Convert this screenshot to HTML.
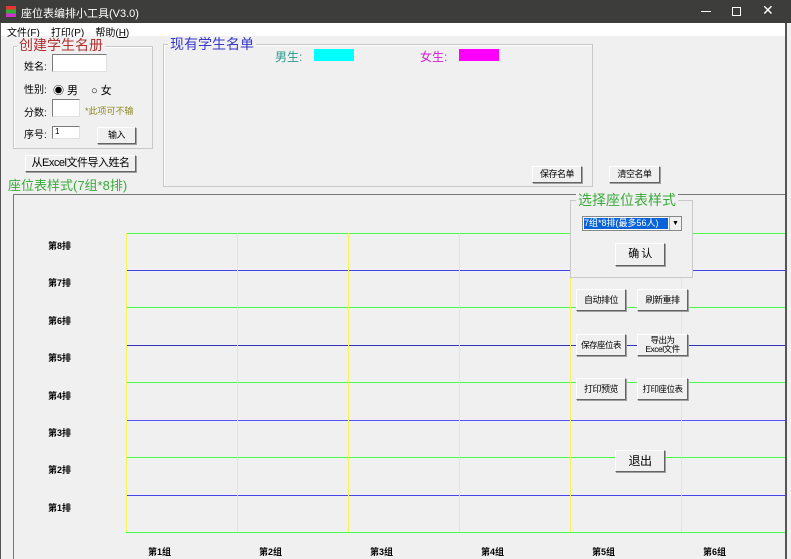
<!DOCTYPE html>
<html><head><meta charset="utf-8"><style>
*{margin:0;padding:0;box-sizing:border-box}
body{width:791px;height:559px;overflow:hidden;background:#f0f0f0;font-family:"Liberation Sans","Noto Sans CJK SC",sans-serif;font-size:12px;position:relative}
.a{position:absolute}
.btn{position:absolute;background:#f0f0f0;border:1px solid #fff;border-right-color:#646464;border-bottom-color:#646464;box-shadow:1px 1px 0 #a0a0a0;font-size:9px;text-align:center;color:#000;white-space:nowrap;overflow:hidden;letter-spacing:-0.5px}
.fs{position:absolute;border:1px solid #c8c8c8;box-shadow:inset 1px 1px 0 #fff}
.lg{position:absolute;background:#f0f0f0;padding:0 2px;font-size:14px;line-height:16px}
.in{position:absolute;background:#fff;border:1px solid #7a7a7a;border-right-color:#e0e0e0;border-bottom-color:#e0e0e0}
.rl{position:absolute;left:48px;font-size:9px;font-weight:bold}
.cl{position:absolute;top:545px;font-size:9px;font-weight:bold}
</style></head><body>
<div class="a" style="left:0;top:0;width:791px;height:23px;background:#3d3d3b"></div>
<div class="a" style="left:6px;top:6px;width:10px;height:11px;background:linear-gradient(#e33 0 33%,#3a3 33% 66%,#c3c 66%)"></div>
<div class="a" style="left:21px;top:5px;color:#fff;font-size:11px">座位表编排小工具(V3.0)</div>
<div class="a" style="left:701px;top:11px;width:10px;height:1px;background:#fff"></div>
<div class="a" style="left:732px;top:7px;width:9px;height:9px;border:1px solid #fff"></div>
<div class="a" style="left:762px;top:2px;color:#fff;font-size:14px">✕</div>
<div class="a" style="left:0;top:23px;width:785px;height:13px;background:#fff"></div>
<div class="a" style="left:7px;top:24px;font-size:10px">文件(<u>F</u>)&nbsp;&nbsp;&nbsp;&nbsp;打印(<u>P</u>)&nbsp;&nbsp;&nbsp;&nbsp;帮助(<u>H</u>)</div>
<div class="a" style="left:0;top:23px;width:1px;height:536px;background:#555"></div>

<div class="fs" style="left:13px;top:46px;width:140px;height:103px"></div>
<div class="lg" style="left:17px;top:37px;color:#b03030">创建学生名册</div>
<div class="a" style="left:24px;top:58px;font-size:10px">姓名:</div>
<div class="in" style="left:52px;top:54px;width:55px;height:18px"></div>
<div class="a" style="left:24px;top:81px;font-size:10px">性别:</div>
<div class="a" style="left:53px;top:82px;font-size:11px">◉ 男</div>
<div class="a" style="left:91px;top:82px;font-size:11px">○ 女</div>
<div class="a" style="left:24px;top:104px;font-size:10px">分数:</div>
<div class="in" style="left:52px;top:99px;width:28px;height:18px"></div>
<div class="a" style="left:85px;top:104px;font-size:9px;color:#8a8a20">*此项可不输</div>
<div class="a" style="left:24px;top:126px;font-size:10px">序号:</div>
<div class="in" style="left:52px;top:126px;width:28px;height:13px;font-size:8px;padding-left:2px">1</div>
<div class="btn" style="left:97px;top:127px;width:39px;height:17px;line-height:15px">输入</div>
<div class="btn" style="left:25px;top:155px;width:111px;height:17px;line-height:15px;font-size:11px">从Excel文件导入姓名</div>
<div class="a" style="left:8px;top:175px;color:#3aaa3a;font-size:13px">座位表样式(7组*8排)</div>

<div class="fs" style="left:163px;top:44px;width:430px;height:143px"></div>
<div class="lg" style="left:168px;top:36px;color:#3838c8">现有学生名单</div>
<div class="a" style="left:275px;top:48px;color:#2a9a8a;font-size:12px">男生:</div>
<div class="a" style="left:314px;top:49px;width:40px;height:12px;background:#0ff"></div>
<div class="a" style="left:420px;top:48px;color:#d020d0;font-size:12px">女生:</div>
<div class="a" style="left:459px;top:49px;width:40px;height:12px;background:#f0f"></div>
<div class="btn" style="left:532px;top:166px;width:50px;height:17px;line-height:15px">保存名单</div>
<div class="btn" style="left:609px;top:166px;width:51px;height:17px;line-height:15px">清空名单</div>

<div class="a" style="left:13px;top:194px;width:773px;height:365px;border-left:1px solid #777;border-top:1px solid #777"></div>
<svg class="a" style="left:0;top:0" width="791" height="559" shape-rendering="crispEdges">
<g stroke-width="1">
<line x1="126" y1="233.5" x2="785" y2="233.5" stroke="#44ff44"/>
<line x1="126" y1="270.5" x2="785" y2="270.5" stroke="#4444ee"/>
<line x1="126" y1="307.5" x2="785" y2="307.5" stroke="#44ff44"/>
<line x1="126" y1="345.5" x2="785" y2="345.5" stroke="#3333bb"/>
<line x1="126" y1="382.5" x2="785" y2="382.5" stroke="#44ff44"/>
<line x1="126" y1="420.5" x2="785" y2="420.5" stroke="#5555ff"/>
<line x1="126" y1="457.5" x2="785" y2="457.5" stroke="#44ff44"/>
<line x1="126" y1="495.5" x2="785" y2="495.5" stroke="#4444ee"/>
<line x1="126" y1="532.5" x2="785" y2="532.5" stroke="#44ff44"/>
<g stroke="#f5f55a">
<line x1="126.5" y1="233" x2="126.5" y2="532"/>
<line x1="237.5" y1="233" x2="237.5" y2="532"/>
<line x1="348.5" y1="233" x2="348.5" y2="532"/>
<line x1="459.5" y1="233" x2="459.5" y2="532"/>
<line x1="570.5" y1="233" x2="570.5" y2="532"/>
<line x1="681.5" y1="233" x2="681.5" y2="532"/>
</g></g>
<rect x="785" y="23" width="2" height="536" fill="#555"/>
<rect x="787" y="23" width="4" height="536" fill="#f0f0f0"/>
</svg>
<div class="rl" style="top:239px">第8排</div><div class="rl" style="top:276px">第7排</div><div class="rl" style="top:314px">第6排</div><div class="rl" style="top:351px">第5排</div><div class="rl" style="top:389px">第4排</div><div class="rl" style="top:426px">第3排</div><div class="rl" style="top:463px">第2排</div><div class="rl" style="top:501px">第1排</div>
<div class="cl" style="left:148px">第1组</div><div class="cl" style="left:259px">第2组</div><div class="cl" style="left:370px">第3组</div><div class="cl" style="left:481px">第4组</div><div class="cl" style="left:592px">第5组</div><div class="cl" style="left:703px">第6组</div>

<div class="a" style="left:570px;top:200px;width:123px;height:78px;background:#f0f0f0;border:1px solid #c8c8c8"></div>
<div class="lg" style="left:576px;top:192px;color:#3aaa3a">选择座位表样式</div>
<div class="a" style="left:582px;top:216px;width:100px;height:15px;background:#fff;border:1px solid #888"></div>
<div class="a" style="left:584px;top:218px;width:84px;height:11px;background:#0a64d8;color:#fff;font-size:9px;line-height:11px;white-space:nowrap;overflow:hidden">7组*8排(最多56人)</div>
<div class="a" style="left:669px;top:217px;width:12px;height:13px;background:#f0f0f0;border-left:1px solid #aaa;font-size:7px;text-align:center;line-height:13px">▼</div>
<div class="btn" style="left:615px;top:243px;width:50px;height:23px;line-height:21px;font-size:11px">确 认</div>
<div class="btn" style="left:576px;top:289px;width:50px;height:22px;line-height:20px">自动排位</div>
<div class="btn" style="left:637px;top:289px;width:51px;height:22px;line-height:20px">刷新重排</div>
<div class="btn" style="left:576px;top:334px;width:50px;height:22px;line-height:20px;font-size:8.5px">保存座位表</div>
<div class="btn" style="left:637px;top:334px;width:51px;height:22px;line-height:9px;padding-top:1px;font-size:8.5px">导出为<br>Excel文件</div>
<div class="btn" style="left:576px;top:378px;width:50px;height:22px;line-height:20px">打印预览</div>
<div class="btn" style="left:637px;top:378px;width:51px;height:22px;line-height:20px;font-size:8.5px">打印座位表</div>
<div class="btn" style="left:615px;top:450px;width:50px;height:22px;line-height:20px;font-size:12px">退出</div>
</body></html>
